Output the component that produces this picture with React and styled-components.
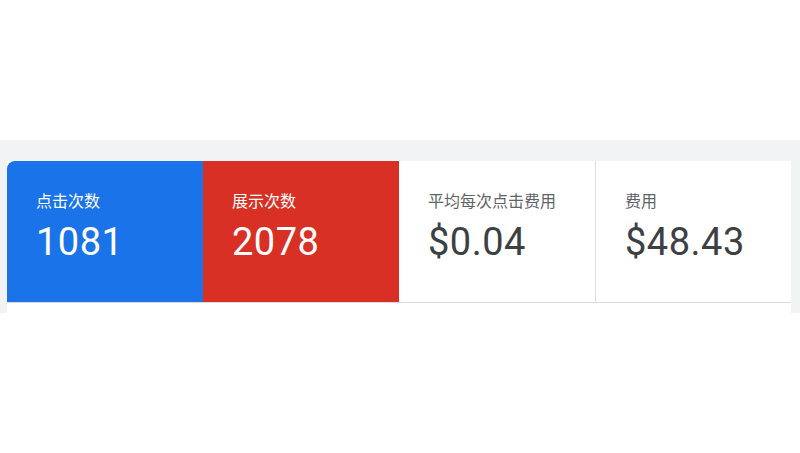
import React from "react";
import styled, { createGlobalStyle } from "styled-components";

const GlobalStyle = createGlobalStyle`
  body {
    margin: 0;
    background: #ffffff;
    font-family: Roboto, "Noto Sans CJK SC", sans-serif;
  }
`;

const Page = styled.div`
  width: 800px;
  height: 453px;
  padding-top: 140px;
  box-sizing: border-box;
  background: #ffffff;
`;

const Band = styled.div`
  background: #f1f3f4;
  padding: 21px 9px 0 7px;
`;

const Panel = styled.div`
  background: #ffffff;
  padding-bottom: 10px;
`;

const Row = styled.div`
  display: grid;
  grid-template-columns: repeat(4, 196px);
  height: 142px;
  border-bottom: 1px solid #dadce0;
  border-right: 1px solid #dadce0;
  box-sizing: border-box;
`;

const colors = {
  blue: { bg: "#1a73e8", label: "#ffffff", value: "#ffffff" },
  red: { bg: "#d93025", label: "#ffffff", value: "#ffffff" },
  plain: { bg: "#ffffff", label: "#5f6368", value: "#3c4043" },
};

const Card = styled.div`
  background: ${(p) => colors[p.$tone].bg};
  border-top-left-radius: ${(p) => (p.$first ? "8px" : "0")};
  border-left: ${(p) => (p.$divider ? "1px solid #dadce0" : "none")};
  padding: 29px 0 0 29px;
  box-sizing: border-box;
`;

const Label = styled.div`
  font-family: "Noto Sans CJK SC", Roboto, sans-serif;
  font-size: 16px;
  line-height: 20px;
  color: ${(p) => colors[p.$tone].label};
`;

const Value = styled.div`
  font-family: Roboto, sans-serif;
  font-size: 38px;
  line-height: 46px;
  letter-spacing: 0.5px;
  margin-top: 9px;
  color: ${(p) => colors[p.$tone].value};
`;

const metrics = [
  { label: "点击次数", value: "1081", tone: "blue" },
  { label: "展示次数", value: "2078", tone: "red" },
  { label: "平均每次点击费用", value: "$0.04", tone: "plain" },
  { label: "费用", value: "$48.43", tone: "plain", divider: true },
];

export default function App() {
  return (
    <>
      <GlobalStyle />
      <Page>
        <Band>
          <Panel>
            <Row>
              {metrics.map((m, i) => (
                <Card key={m.label} $tone={m.tone} $first={i === 0} $divider={m.divider}>
                  <Label $tone={m.tone}>{m.label}</Label>
                  <Value $tone={m.tone}>{m.value}</Value>
                </Card>
              ))}
            </Row>
          </Panel>
        </Band>
      </Page>
    </>
  );
}
